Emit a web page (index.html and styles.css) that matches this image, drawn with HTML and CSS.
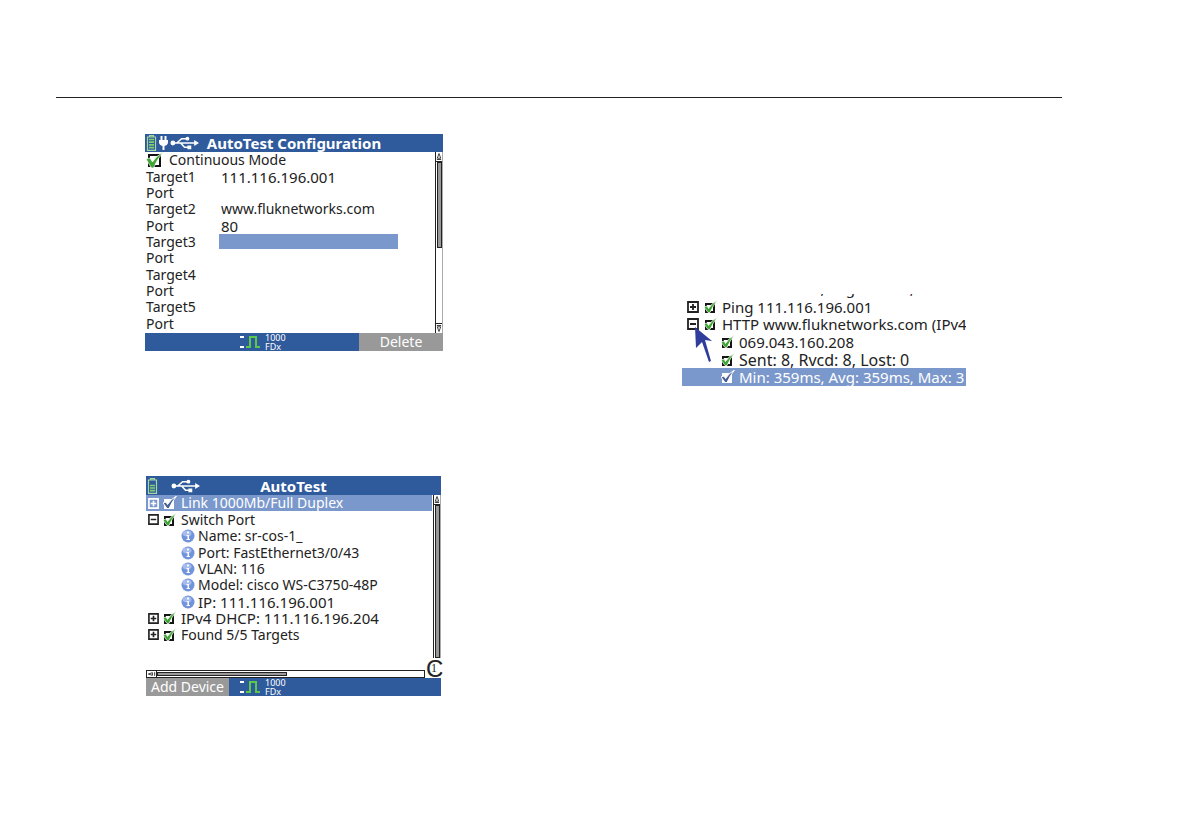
FILE: index.html
```html
<!DOCTYPE html>
<html lang="en">
<head>
    <meta charset="utf-8">
    <meta name="viewport" content="width=device-width, initial-scale=1.0">
    <title>AutoTest</title>
    <link rel="stylesheet" href="styles.css">
</head>
<body>
    <!-- Shared icons -->
    <svg class="sprite" aria-hidden="true">
        <symbol id="battery" viewBox="0 0 10 16">
            <path d="M3 2V.7h4V2M1 2h8v13.3H1z" fill="none" stroke="#a5d8a0" stroke-width="1.2"/>
            <path d="M2.500 4.500h5M2.500 7.200h5M2.500 9.900h5M2.500 12.600h5" stroke="#7fd070" stroke-width="1.700"/>
        </symbol>
        <symbol id="battery-low" viewBox="0 0 10 16">
            <path d="M3 2V.7h4V2M1 2h8v13.3H1z" fill="none" stroke="#a5d8a0" stroke-width="1.2"/>
            <path d="M2.500 7.500h5M2.500 10h5M2.500 12.600h5" stroke="#7fd070" stroke-width="1.600"/>
        </symbol>
        <symbol id="plug" viewBox="0 0 10 14">
            <path d="M2 0h2v4h2V0h2v4h1.5v3Q9 9.500 6 10v4H4v-4Q1 9.500 .5 7V4H2z" fill="#fff"/>
        </symbol>
        <symbol id="usb" viewBox="0 0 30 14">
            <path d="M3 7h23M7 7l5-4.500h5M11 7l4 4.500h4" fill="none" stroke="#fff" stroke-width="1.600"/>
            <circle cx="3" cy="7" r="2.500" fill="#fff"/>
            <circle cx="18" cy="2.500" r="2" fill="#fff"/>
            <path d="M18 9.500h4v4h-4zM25 4l5 3-5 3z" fill="#fff"/>
        </symbol>
        <symbol id="tick" viewBox="0 0 14 14">
            <path d="M2 4h8v8H2z" fill="#fff" stroke="#151515" stroke-width="2"/>
            <path d="M0 7l3-1 1.500 2.500Q8 3 13.500 0 9 5.500 6 12.500H4z" fill="#3fa535" stroke="#fff" stroke-width=".7"/>
        </symbol>
        <symbol id="tick-on" viewBox="0 0 14 14">
            <path d="M2 4h8v8H2z" fill="#fff" stroke="#fff" stroke-width="2"/>
            <path d="M0 7l3-1 1.500 2.500Q8 3 13.500 0 9 5.500 6 12.500H4z" fill="#4a6296" stroke="#fff"/>
        </symbol>
        <symbol id="plus" viewBox="0 0 12 12">
            <path d="M1 1h10v10H1zM3 6h6M6 3v6" fill="none" stroke="currentColor" stroke-width="1.800"/>
        </symbol>
        <symbol id="minus" viewBox="0 0 12 12">
            <path d="M1 1h10v10H1zM3 6h6" fill="none" stroke="currentColor" stroke-width="1.800"/>
        </symbol>
        <symbol id="info" viewBox="0 0 14 14">
            <circle cx="7" cy="7" r="6.500" fill="#7193dc"/>
            <ellipse cx="6" cy="4.500" rx="4.500" ry="3" fill="#a3bbed"/>
            <path d="M6 2.500h2v2H6zM5.500 6H8v4h1v1H5.500v-1h1V7h-1z" fill="#fff"/>
        </symbol>
        <symbol id="pulse" viewBox="0 0 22 14">
            <path d="M1 2h4M1 12h4" stroke="#fff" stroke-width="2"/>
            <path d="M7 12h4V2h6v10h4" fill="none" stroke="#5ac84a" stroke-width="2"/>
        </symbol>
    </svg>

    <main class="page">
        <div class="left">
            <!-- Configuration screen -->
            <form class="screen">
                <header class="bar">
                    <span class="status">
                        <svg class="battery"><use href="#battery"/></svg>
                        <svg class="plug"><use href="#plug"/></svg>
                        <svg class="usb"><use href="#usb"/></svg>
                    </span>
                    <h1>AutoTest Configuration</h1>
                </header>
                <div class="body">
                    <div class="fields">
                        <div class="mode">
                            <input type="checkbox" id="mode" checked>
                            <svg class="mode-tick" viewBox="0 0 18 16"><path d="M0 7l4-1 2.500 4Q10 4 17.500 0 11 7 7.500 16H5.500z" fill="#3fa535" stroke="#fff" stroke-width=".7"/></svg>
                            <label for="mode">Continuous Mode</label>
                        </div>
                        <label for="t1">Target1</label><input type="text" id="t1" class="num" value="111.116.196.001">
                        <label for="p1">Port</label><input type="text" id="p1">
                        <label for="t2">Target2</label><input type="text" id="t2" value="www.fluknetworks.com">
                        <label for="p2">Port</label><input type="text" id="p2" class="num" value="80">
                        <label for="t3">Target3</label><input type="text" id="t3" class="active">
                        <label for="p3">Port</label><input type="text" id="p3">
                        <label for="t4">Target4</label><input type="text" id="t4">
                        <label for="p4">Port</label><input type="text" id="p4">
                        <label for="t5">Target5</label><input type="text" id="t5">
                        <label for="p5">Port</label><input type="text" id="p5">
                    </div>
                    <div class="vscroll">
                        <svg class="arrow" viewBox="0 0 7 10"><path d="M3.500 1.500L1.500 7h4zM1 8.500h5" fill="none" stroke="#222"/></svg>
                        <div class="thumb half"></div>
                        <svg class="arrow down" viewBox="0 0 7 10"><path d="M3.500 8.500L1.500 3h4zM1 1.500h5" fill="none" stroke="#222"/></svg>
                    </div>
                </div>
                <footer class="bar foot">
                    <span class="link"><svg class="pulse"><use href="#pulse"/></svg><small>1000<br>FDx</small></span>
                    <button type="button" class="right-key">Delete</button>
                </footer>
            </form>

            <!-- Results screen -->
            <section class="screen results">
                <header class="bar">
                    <span class="status">
                        <svg class="battery"><use href="#battery-low"/></svg>
                        <svg class="usb alone"><use href="#usb"/></svg>
                    </span>
                    <h1>AutoTest</h1>
                </header>
                <div class="body">
                    <ul class="tree">
                        <li class="selected"><svg class="box"><use href="#plus"/></svg><svg class="tick"><use href="#tick-on"/></svg>Link 1000Mb/Full Duplex</li>
                        <li><svg class="box"><use href="#minus"/></svg><svg class="tick"><use href="#tick"/></svg>Switch Port</li>
                        <li class="child"><svg class="info"><use href="#info"/></svg>Name: sr-cos-1_</li>
                        <li class="child"><svg class="info"><use href="#info"/></svg>Port: FastEthernet3/0/43</li>
                        <li class="child"><svg class="info"><use href="#info"/></svg>VLAN: 116</li>
                        <li class="child"><svg class="info"><use href="#info"/></svg>Model: cisco WS-C3750-48P</li>
                        <li class="child num"><svg class="info"><use href="#info"/></svg>IP: 111.116.196.001</li>
                        <li class="num"><svg class="box"><use href="#plus"/></svg><svg class="tick"><use href="#tick"/></svg>IPv4 DHCP: 111.116.196.204</li>
                        <li><svg class="box"><use href="#plus"/></svg><svg class="tick"><use href="#tick"/></svg>Found 5/5 Targets</li>
                    </ul>
                    <div class="vscroll">
                        <svg class="arrow" viewBox="0 0 7 10"><path d="M3.500 1.500L1.500 7h4zM1 8.500h5" fill="none" stroke="#222"/></svg>
                        <div class="thumb"></div>
                    </div>
                </div>
                <div class="hscroll">
                    <svg class="harrow" viewBox="0 0 10 6"><path d="M1.500 3L6 1.500v3zM8.500 1v4" fill="none" stroke="#222"/></svg>
                    <div class="hthumb"></div>
                </div>
                <span class="mark">C<small>1</small></span>
                <footer class="bar foot">
                    <button type="button" class="left-key">Add Device</button>
                    <span class="link"><svg class="pulse"><use href="#pulse"/></svg><small>1000<br>FDx</small></span>
                </footer>
            </section>
        </div>

        <!-- Expanded target -->
        <div class="right">
            <section class="detail">
                <div class="cut"><span>Min: 359ms, Avg: 359ms, Max: 3</span></div>
                <ul class="tree">
                    <li><svg class="box"><use href="#plus"/></svg><svg class="tick"><use href="#tick"/></svg>Ping 111.116.196.001</li>
                    <li><svg class="box"><use href="#minus"/></svg><svg class="tick"><use href="#tick"/></svg>HTTP www.fluknetworks.com (IPv4)</li>
                    <li class="child"><svg class="tick"><use href="#tick"/></svg>069.043.160.208</li>
                    <li class="child counts"><svg class="tick"><use href="#tick"/></svg>Sent: 8, Rvcd: 8, Lost: 0</li>
                    <li class="child selected"><svg class="tick"><use href="#tick-on"/></svg>Min: 359ms, Avg: 359ms, Max: 3</li>
                </ul>
                <svg class="pointer" viewBox="0 0 18 36"><path d="M1 0l17 14-7-1 6 21-2 1-7-20-6 6z" fill="#2f3d9c"/></svg>
            </section>
        </div>
    </main>
</body>
</html>
```
FILE: styles.css
```css
* {
    box-sizing: border-box;
}

body {
    margin: 0;
    background: #fff;
    color: #222;
    font-family: "Noto Sans", sans-serif;
    font-size: 14px;
    line-height: 16px;
}

svg {
    display: block;
    flex: none;
}

.sprite {
    position: absolute;
    width: 0;
    height: 0;
}

.page {
    display: grid;
    grid-template-columns: 537fr 469fr;
    margin: 97px 126px 0 56px;
    border-top: 1px solid #222;
}

.left {
    display: flex;
    flex-direction: column;
    gap: 125px;
    padding: 36px 0 0 89px;
}

.right {
    padding: 196px 0 0 89px;
}

.screen {
    position: relative;
    width: 298px;
}

.results {
    width: 295px;
    margin-left: 1px;
}

/* Title and soft key bars */
.bar {
    position: relative;
    display: flex;
    align-items: center;
    justify-content: center;
    height: 18px;
    background: #2f5a9b;
    color: #fff;
}

.bar h1 {
    margin: 0;
    font-size: 15px;
    line-height: 18px;
}

.status {
    position: absolute;
    left: 1px;
    display: flex;
    align-items: center;
    gap: 1px;
}

.battery {
    width: 11px;
    height: 16px;
}

.plug {
    width: 11px;
    height: 14px;
}

.usb {
    width: 29px;
    height: 14px;
}

.usb.alone {
    margin-left: 12px;
}

.foot {
    justify-content: flex-start;
}

.link {
    display: flex;
    gap: 4px;
    align-items: center;
    margin-left: 94px;
}

.left-key + .link {
    margin-left: 10px;
}

.link small {
    font-size: 9px;
    line-height: 9px;
}

.pulse {
    width: 22px;
    height: 14px;
}

button {
    height: 18px;
    padding: 0;
    border: 0;
    background: #999;
    color: #fff;
    font: inherit;
    line-height: 18px;
}

.right-key {
    width: 84px;
    margin-left: auto;
}

.left-key {
    width: 83px;
}

/* Screen contents */
.body {
    display: flex;
}

.fields {
    display: grid;
    flex: 1;
    grid-template-columns: 73px 179px;
    grid-auto-rows: 1fr;
    align-items: center;
    height: 181px;
    padding: 0 0 1px 1px;
}

.fields input[type="text"] {
    width: 100%;
    height: 15px;
    padding: 0 2px;
    border: 0;
    background: none;
    color: inherit;
    font: inherit;
}

.fields input.active {
    background: #7b98cc;
}

.num,
.fields input.num {
    font-size: 15px;
}

.mode {
    position: relative;
    display: flex;
    grid-column: 1 / 3;
    align-items: center;
    gap: 8px;
}

.mode input {
    appearance: none;
    width: 13px;
    height: 13px;
    margin: 0 0 0 2px;
    border: 2px solid #111;
}

.mode-tick {
    position: absolute;
    left: 0;
    width: 18px;
    height: 16px;
}

.vscroll {
    display: flex;
    flex-direction: column;
    width: 8px;
    border-left: 1px solid #222;
    border-right: 1px solid #aaa;
}

.arrow {
    width: 6px;
    height: 10px;
    border-bottom: 1px solid #222;
}

.arrow.down {
    margin-top: auto;
    border-top: 1px solid #222;
    border-bottom: 0;
}

.thumb {
    flex: 1;
    margin-left: 1px;
    border: 1px solid #222;
    background: #999;
}

.thumb.half {
    flex: none;
    height: 86px;
}

.results .vscroll {
    height: 163px;
}

.results .bar:first-child {
    height: 19px;
}

/* Result tree */
.tree {
    flex: 1;
    margin: 0;
    padding: 0;
    list-style: none;
}

.results .tree {
    display: grid;
    grid-auto-rows: 1fr;
    height: 148px;
    margin-right: 1px;
}

.tree li {
    display: flex;
    align-items: center;
    padding-left: 2px;
    white-space: nowrap;
}

.tree .child {
    padding-left: 35px;
}

.tree .selected {
    background: #7b98cc;
    color: #fff;
}

.box {
    width: 11px;
    height: 11px;
    margin-right: 4px;
}

.tick {
    width: 14px;
    height: 14px;
    margin-right: 4px;
}

.info {
    width: 14px;
    height: 14px;
    margin-right: 3px;
}

.hscroll {
    display: flex;
    align-items: center;
    width: 279px;
    height: 8px;
    margin: 12px 0 0;
    border: 1px solid #222;
}

.harrow {
    width: 10px;
    height: 6px;
    border-right: 1px solid #222;
}

.hthumb {
    width: 130px;
    height: 4px;
    border: 1px solid #222;
    background: #999;
}

.mark {
    position: absolute;
    right: -2px;
    bottom: 17px;
    width: 17px;
    height: 21px;
    background: #fff;
    font-family: "Liberation Sans", sans-serif;
    font-size: 24px;
    line-height: 21px;
}

.mark small {
    position: absolute;
    left: 5px;
    top: 0;
    font-family: "Liberation Serif", serif;
    font-size: 12px;
}

/* Expanded target */
.detail {
    position: relative;
    width: 284px;
    overflow: hidden;
    font-size: 15px;
}

.cut {
    display: flex;
    align-items: flex-end;
    height: 4px;
    padding-left: 57px;
    overflow: hidden;
    line-height: 20px;
    white-space: nowrap;
}

.detail .tree {
    display: grid;
    grid-auto-rows: 1fr;
    height: 88px;
}

.detail .tree li {
    padding-left: 5px;
}

.detail .tree .child {
    padding-left: 39px;
}

.detail .box {
    width: 12px;
    height: 12px;
    margin-right: 5px;
}

.detail .counts {
    font-size: 16px;
}

.pointer {
    position: absolute;
    left: 12px;
    top: 33px;
    width: 18px;
    height: 36px;
}
```
